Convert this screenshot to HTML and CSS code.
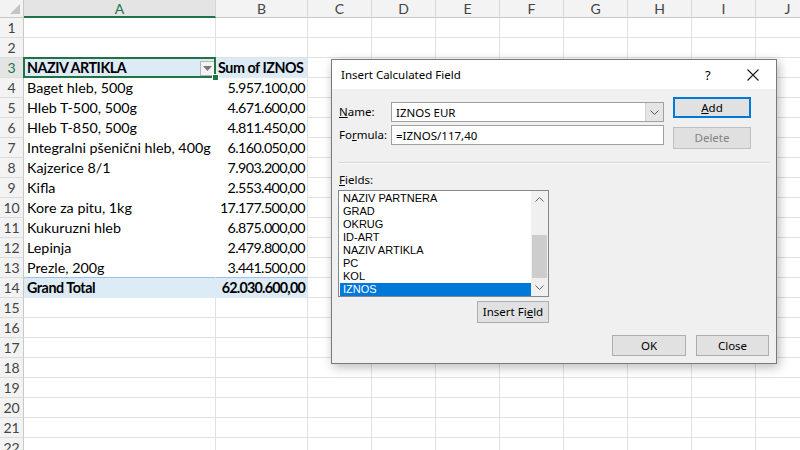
FILE: index.html
```html
<!DOCTYPE html>
<html>
<head>
<meta charset="utf-8">
<link rel="stylesheet" href="styles.css">
</head>
<body>
<div class="sheet">
  <div class="corner"><svg width="24" height="18"><polygon points="20,4 20,14 10,14" fill="#c4c4c4"/></svg></div>
  <div class="ch sel">A</div><div class="ch">B</div><div class="ch">C</div><div class="ch">D</div><div class="ch">E</div><div class="ch">F</div><div class="ch">G</div><div class="ch">H</div><div class="ch">I</div><div class="ch">J</div>

  <div class="rh">1</div><div class="c"></div><div class="c"></div><div class="c"></div><div class="c"></div><div class="c"></div><div class="c"></div><div class="c"></div><div class="c"></div><div class="c"></div><div class="c"></div>
  <div class="rh">2</div><div class="c"></div><div class="c"></div><div class="c"></div><div class="c"></div><div class="c"></div><div class="c"></div><div class="c"></div><div class="c"></div><div class="c"></div><div class="c"></div>

  <div class="rh rsel">3</div><div class="c pa hd active"><b>NAZIV ARTIKLA</b><span class="filter"><svg width="9" height="5"><polygon points="0,0 9,0 4.5,5" fill="#777"/></svg></span><span class="handle"></span></div><div class="c pb hd"><b>Sum of IZNOS</b></div><div class="c"></div><div class="c"></div><div class="c"></div><div class="c"></div><div class="c"></div><div class="c"></div><div class="c"></div><div class="c"></div>

  <div class="rh">4</div><div class="c pa">Baget hleb, 500g</div><div class="c pb num">5.957.100,00</div><div class="c"></div><div class="c"></div><div class="c"></div><div class="c"></div><div class="c"></div><div class="c"></div><div class="c"></div><div class="c"></div>
  <div class="rh">5</div><div class="c pa">Hleb T-500, 500g</div><div class="c pb num">4.671.600,00</div><div class="c"></div><div class="c"></div><div class="c"></div><div class="c"></div><div class="c"></div><div class="c"></div><div class="c"></div><div class="c"></div>
  <div class="rh">6</div><div class="c pa">Hleb T-850, 500g</div><div class="c pb num">4.811.450,00</div><div class="c"></div><div class="c"></div><div class="c"></div><div class="c"></div><div class="c"></div><div class="c"></div><div class="c"></div><div class="c"></div>
  <div class="rh">7</div><div class="c pa">Integralni pšenični hleb, 400g</div><div class="c pb num">6.160.050,00</div><div class="c"></div><div class="c"></div><div class="c"></div><div class="c"></div><div class="c"></div><div class="c"></div><div class="c"></div><div class="c"></div>
  <div class="rh">8</div><div class="c pa">Kajzerice 8/1</div><div class="c pb num">7.903.200,00</div><div class="c"></div><div class="c"></div><div class="c"></div><div class="c"></div><div class="c"></div><div class="c"></div><div class="c"></div><div class="c"></div>
  <div class="rh">9</div><div class="c pa">Kifla</div><div class="c pb num">2.553.400,00</div><div class="c"></div><div class="c"></div><div class="c"></div><div class="c"></div><div class="c"></div><div class="c"></div><div class="c"></div><div class="c"></div>
  <div class="rh">10</div><div class="c pa">Kore za pitu, 1kg</div><div class="c pb num">17.177.500,00</div><div class="c"></div><div class="c"></div><div class="c"></div><div class="c"></div><div class="c"></div><div class="c"></div><div class="c"></div><div class="c"></div>
  <div class="rh">11</div><div class="c pa">Kukuruzni hleb</div><div class="c pb num">6.875.000,00</div><div class="c"></div><div class="c"></div><div class="c"></div><div class="c"></div><div class="c"></div><div class="c"></div><div class="c"></div><div class="c"></div>
  <div class="rh">12</div><div class="c pa">Lepinja</div><div class="c pb num">2.479.800,00</div><div class="c"></div><div class="c"></div><div class="c"></div><div class="c"></div><div class="c"></div><div class="c"></div><div class="c"></div><div class="c"></div>
  <div class="rh">13</div><div class="c pa last">Prezle, 200g</div><div class="c pb num last">3.441.500,00</div><div class="c"></div><div class="c"></div><div class="c"></div><div class="c"></div><div class="c"></div><div class="c"></div><div class="c"></div><div class="c"></div>

  <div class="rh">14</div><div class="c pa hd"><b>Grand Total</b></div><div class="c pb hd num"><b>62.030.600,00</b></div><div class="c"></div><div class="c"></div><div class="c"></div><div class="c"></div><div class="c"></div><div class="c"></div><div class="c"></div><div class="c"></div>

  <div class="rh">15</div><div class="c"></div><div class="c"></div><div class="c"></div><div class="c"></div><div class="c"></div><div class="c"></div><div class="c"></div><div class="c"></div><div class="c"></div><div class="c"></div>
  <div class="rh">16</div><div class="c"></div><div class="c"></div><div class="c"></div><div class="c"></div><div class="c"></div><div class="c"></div><div class="c"></div><div class="c"></div><div class="c"></div><div class="c"></div>
  <div class="rh">17</div><div class="c"></div><div class="c"></div><div class="c"></div><div class="c"></div><div class="c"></div><div class="c"></div><div class="c"></div><div class="c"></div><div class="c"></div><div class="c"></div>
  <div class="rh">18</div><div class="c"></div><div class="c"></div><div class="c"></div><div class="c"></div><div class="c"></div><div class="c"></div><div class="c"></div><div class="c"></div><div class="c"></div><div class="c"></div>
  <div class="rh">19</div><div class="c"></div><div class="c"></div><div class="c"></div><div class="c"></div><div class="c"></div><div class="c"></div><div class="c"></div><div class="c"></div><div class="c"></div><div class="c"></div>
  <div class="rh">20</div><div class="c"></div><div class="c"></div><div class="c"></div><div class="c"></div><div class="c"></div><div class="c"></div><div class="c"></div><div class="c"></div><div class="c"></div><div class="c"></div>
  <div class="rh">21</div><div class="c"></div><div class="c"></div><div class="c"></div><div class="c"></div><div class="c"></div><div class="c"></div><div class="c"></div><div class="c"></div><div class="c"></div><div class="c"></div>
  <div class="rh">22</div><div class="c"></div><div class="c"></div><div class="c"></div><div class="c"></div><div class="c"></div><div class="c"></div><div class="c"></div><div class="c"></div><div class="c"></div><div class="c"></div>
</div>

<div class="dialog">
  <div class="titlebar">
    <span class="title">Insert Calculated Field</span>
    <span class="help">?</span>
    <span class="close"><svg width="12" height="12" viewBox="0 0 12 12"><path d="M0.5 0.5 L11.5 11.5 M11.5 0.5 L0.5 11.5" stroke="#1a1a1a" stroke-width="1.1" fill="none"/></svg></span>
  </div>
  <div class="body">
    <div class="top">
      <div class="form">
        <label><u>N</u>ame:</label>
        <div class="combo"><span class="val">IZNOS EUR</span><span class="drop"><svg width="9" height="5" viewBox="0 0 9 5"><path d="M0.5 0.5 L4.5 4.5 L8.5 0.5" stroke="#555" fill="none"/></svg></span></div>
        <label>Fo<u>r</u>mula:</label>
        <div class="input"><span class="val">=IZNOS/117,40</span></div>
      </div>
      <div class="sidebtns">
        <div class="btn default"><u>A</u>dd</div>
        <div class="btn disabled">Delete</div>
      </div>
    </div>
    <div class="sep"></div>
    <div class="fields-label"><u>F</u>ields:</div>
    <div class="listwrap">
      <div class="list">
        <div class="items">
          <div class="item">NAZIV PARTNERA</div>
          <div class="item">GRAD</div>
          <div class="item">OKRUG</div>
          <div class="item">ID-ART</div>
          <div class="item">NAZIV ARTIKLA</div>
          <div class="item">PC</div>
          <div class="item">KOL</div>
          <div class="item selected">IZNOS</div>
        </div>
        <div class="scroll">
          <span class="arrow"><svg width="9" height="5" viewBox="0 0 9 5"><path d="M0.5 4.5 L4.5 0.5 L8.5 4.5" stroke="#606060" fill="none"/></svg></span>
          <span class="track"><span class="thumb"></span></span>
          <span class="arrow"><svg width="9" height="5" viewBox="0 0 9 5"><path d="M0.5 0.5 L4.5 4.5 L8.5 0.5" stroke="#606060" fill="none"/></svg></span>
        </div>
      </div>
      <div class="btn insert">Insert Fi<u>e</u>ld</div>
    </div>
    <div class="bottom">
      <div class="btn ok">OK</div>
      <div class="btn cls">Close</div>
    </div>
  </div>
</div>
</body>
</html>
```
FILE: styles.css
```css
html, body {
  margin: 0;
  padding: 0;
}
body {
  width: 800px;
  height: 450px;
  overflow: hidden;
  position: relative;
  background: #fff;
  font-family: Lato, "Liberation Sans", sans-serif;
}
.sheet {
  display: grid;
  grid-template-columns: 24px 192px 92px repeat(8, 64px);
  grid-template-rows: 18px;
  grid-auto-rows: 20px;
  width: 820px;
  height: 450px;
  overflow: hidden;
}
.corner {
  background: #f3f3f3;
  border-right: 1px solid #c8c8c8;
  border-bottom: 1px solid #c8c8c8;
  box-sizing: border-box;
}
.corner svg { display: block; }
.ch {
  background: #f3f3f3;
  border-right: 1px solid #d6d6d6;
  border-bottom: 1px solid #c8c8c8;
  box-sizing: border-box;
  text-align: center;
  font-size: 14px;
  line-height: 17px;
  color: #444;
}
.ch.sel {
  color: #217346;
  background: #e4e4e4;
  border-bottom: 2px solid #217346;
}
.rh {
  background: #f3f3f3;
  border-right: 1px solid #c8c8c8;
  border-bottom: 1px solid #dcdcdc;
  box-sizing: border-box;
  text-align: center;
  font-size: 14px;
  line-height: 20px;
  color: #444;
  overflow: hidden;
}
.rh.rsel {
  color: #217346;
  background: #e4e4e4;
}
.c {
  border-right: 1px solid #e1e1e1;
  border-bottom: 1px solid #e1e1e1;
  box-sizing: border-box;
  font-size: 14.3px;
  line-height: 20px;
  padding: 0 3px;
  white-space: nowrap;
  color: #000;
  position: relative;
}
.c.pa { border-right-color: transparent; border-bottom-color: #fff; }
.c.pb { border-bottom-color: #fff; padding-left: 2px; }
.c.hd { background: #ddebf7; border-bottom-color: #ddebf7; }
.c.last { border-bottom-color: #9bc2e6; }
.c.num { text-align: right; padding-right: 2px; letter-spacing: -0.6px; }
.c b { font-weight: 700; letter-spacing: -0.45px; }
.c.num b { letter-spacing: -0.75px; }

.active::after {
  content: "";
  position: absolute;
  left: -1px;
  top: -1px;
  right: -1px;
  bottom: -1px;
  border: 2px solid #217346;
  pointer-events: none;
}
.filter {
  position: absolute;
  left: 176px;
  top: 3px;
  width: 13px;
  height: 13px;
  border: 1px solid #b5b5b5;
  background: #f3f3f3;
  display: flex;
  align-items: center;
  justify-content: center;
}
.filter svg { display: block; }
.handle {
  position: absolute;
  right: -4px;
  bottom: -4px;
  width: 5px;
  height: 5px;
  background: #217346;
  border: 1px solid #fff;
  z-index: 2;
}

/* Dialog */
.dialog {
  position: absolute;
  left: 331px;
  top: 59px;
  width: 446px;
  height: 305px;
  box-sizing: border-box;
  border: 1px solid #7a7a7a;
  background: #f0f0f0;
  box-shadow: 2px 3px 10px rgba(0, 0, 0, 0.28);
  font-family: "Noto Sans", "Open Sans", sans-serif;
  font-size: 11.5px;
  color: #000;
  display: flex;
  flex-direction: column;
}
.titlebar {
  height: 29px;
  background: #fff;
  display: flex;
  align-items: center;
  padding-left: 9px;
  font-size: 11.5px;
}
.title { flex: 1; }
.help {
  width: 10px;
  margin-right: 32px;
  font-size: 13px;
}
.close {
  width: 12px;
  margin-right: 17px;
  display: flex;
}
.body {
  flex: 1;
  padding: 8px 7px 0 7px;
  display: flex;
  flex-direction: column;
}
.top {
  display: flex;
  padding-right: 18px;
}
.form {
  display: grid;
  grid-template-columns: 52px 273px;
  grid-auto-rows: 20px;
  row-gap: 3px;
  margin-top: 5px;
  align-items: center;
}
.form label { line-height: 20px; }
.combo, .input {
  height: 20px;
  box-sizing: border-box;
  border: 1px solid #a0a0a0;
  background: #fff;
  display: flex;
  align-items: center;
  padding-left: 4px;
}
.val { flex: 1; }
.drop {
  width: 17px;
  height: 18px;
  background: #e5e5e5;
  border-left: 1px solid #cfcfcf;
  display: flex;
  align-items: center;
  justify-content: center;
}
.sidebtns {
  margin-left: 9px;
  width: 78px;
  display: flex;
  flex-direction: column;
  gap: 9px;
}
.btn {
  box-sizing: border-box;
  border: 1px solid #adadad;
  background: #e1e1e1;
  text-align: center;
  height: 21px;
  line-height: 19px;
}
.btn.default {
  border: 2px solid #0078d7;
  line-height: 17px;
}
.btn.disabled {
  color: #838383;
  border-color: #bfbfbf;
  background: #e0e0e0;
  height: 22px;
  line-height: 20px;
}
.sep {
  margin-top: 13px;
  height: 1px;
  background: #d5d5d5;
  border-bottom: 1px solid #fbfbfb;
}
.fields-label {
  margin-top: 8px;
  line-height: 16px;
}
.listwrap {
  width: 211px;
  margin-top: 2px;
  margin-left: -1px;
  display: flex;
  flex-direction: column;
  align-items: flex-end;
}
.list {
  width: 211px;
  height: 107px;
  box-sizing: border-box;
  border: 1px solid #828790;
  background: #fff;
  display: flex;
}
.items {
  flex: 1;
  padding-top: 1px;
  padding-left: 1px;
  font-family: "Liberation Sans", Arial, sans-serif;
  font-size: 11px;
}
.item {
  height: 13px;
  line-height: 13px;
  padding-left: 3px;
  white-space: nowrap;
  overflow: hidden;
}
.item.selected {
  background: #0078d7;
  color: #fff;
}
.scroll {
  width: 17px;
  background: #f0f0f0;
  display: flex;
  flex-direction: column;
}
.arrow {
  height: 17px;
  display: flex;
  align-items: center;
  justify-content: center;
}
.track {
  flex: 1;
  display: flex;
  flex-direction: column;
  justify-content: flex-end;
  padding: 0 1px 1px 1px;
}
.thumb {
  height: 43px;
  background: #cdcdcd;
}
.btn.insert {
  width: 72px;
  height: 22px;
  line-height: 20px;
  margin-top: 4px;
}
.bottom {
  display: flex;
  justify-content: flex-end;
  gap: 10px;
  margin-top: 12px;
}
.btn.ok { width: 74px; }
.btn.cls { width: 73px; }
u { text-decoration: underline; text-underline-offset: 1px; }
```
